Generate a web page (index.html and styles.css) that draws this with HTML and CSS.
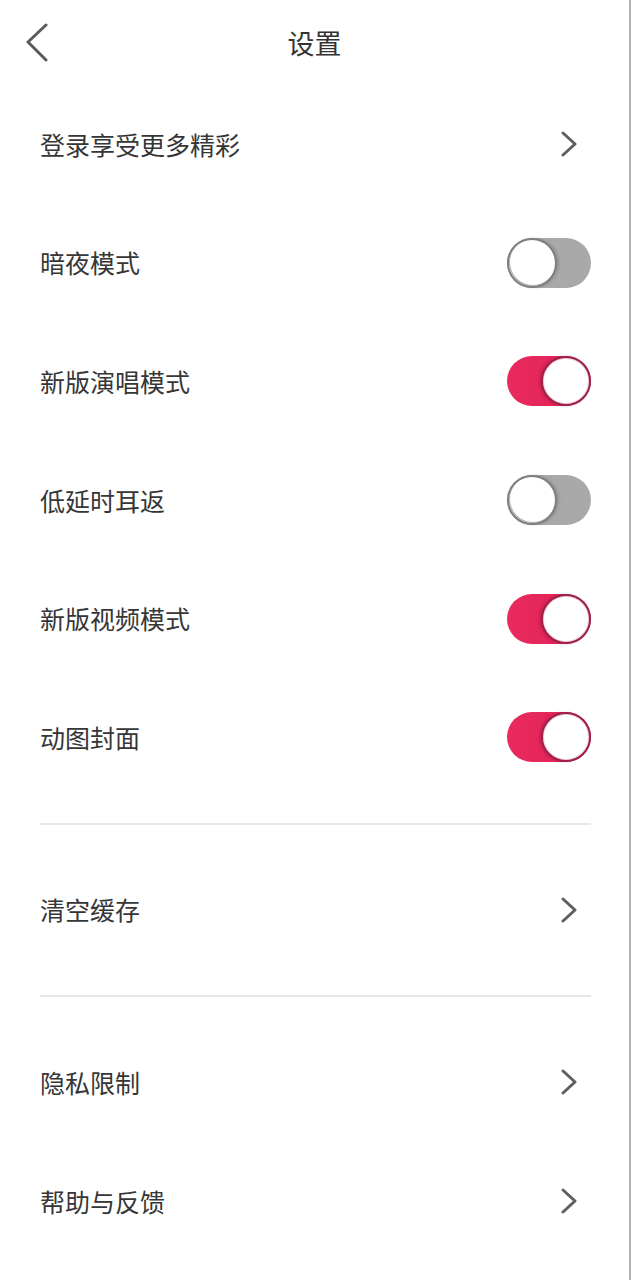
FILE: index.html
```html
<!DOCTYPE html>
<html lang="zh">
<head>
<meta charset="utf-8">
<title>设置</title>
<link rel="stylesheet" href="styles.css">
</head>
<body>
<div class="page">
  <header class="header">
    <div class="back">
      <svg width="26" height="40" viewBox="0 0 26 40"><path d="M22 2 L4 19 L22 37" fill="none" stroke="#5a5a5a" stroke-width="3" stroke-linecap="round" stroke-linejoin="round"/></svg>
    </div>
    <h1 class="title">设置</h1>
    <div></div>
  </header>
  <ul class="list">
    <li class="row"><span class="label">登录享受更多精彩</span><svg class="chev" width="18" height="26" viewBox="0 0 18 26"><path d="M3 2 L15 13 L3 24" fill="none" stroke="#5e5e5e" stroke-width="3" stroke-linecap="round" stroke-linejoin="round"/></svg></li>
    <li class="row"><span class="label">暗夜模式</span><span class="toggle"><span class="knob"></span></span></li>
    <li class="row"><span class="label">新版演唱模式</span><span class="toggle on"><span class="knob"></span></span></li>
    <li class="row"><span class="label">低延时耳返</span><span class="toggle"><span class="knob"></span></span></li>
    <li class="row"><span class="label">新版视频模式</span><span class="toggle on"><span class="knob"></span></span></li>
    <li class="row"><span class="label">动图封面</span><span class="toggle on"><span class="knob"></span></span></li>
  </ul>
  <hr class="divider">
  <ul class="list">
    <li class="row"><span class="label">清空缓存</span><svg class="chev" width="18" height="26" viewBox="0 0 18 26"><path d="M3 2 L15 13 L3 24" fill="none" stroke="#5e5e5e" stroke-width="3" stroke-linecap="round" stroke-linejoin="round"/></svg></li>
  </ul>
  <hr class="divider">
  <ul class="list">
    <li class="row"><span class="label">隐私限制</span><svg class="chev" width="18" height="26" viewBox="0 0 18 26"><path d="M3 2 L15 13 L3 24" fill="none" stroke="#5e5e5e" stroke-width="3" stroke-linecap="round" stroke-linejoin="round"/></svg></li>
    <li class="row"><span class="label">帮助与反馈</span><svg class="chev" width="18" height="26" viewBox="0 0 18 26"><path d="M3 2 L15 13 L3 24" fill="none" stroke="#5e5e5e" stroke-width="3" stroke-linecap="round" stroke-linejoin="round"/></svg></li>
  </ul>
</div>
</body>
</html>
```

FILE: styles.css
```css
* { box-sizing: border-box; }
html, body {
  margin: 0;
  padding: 0;
  background: #fff;
}
body {
  font-family: "Noto Sans CJK SC", "Noto Sans", sans-serif;
  color: #333;
}
.page {
  width: 631px;
  min-height: 1280px;
  border-right: 2px solid #b4b4b4;
}
.header {
  height: 85px;
  display: grid;
  grid-template-columns: 1fr auto 1fr;
  align-items: center;
}
.back {
  padding-left: 24px;
  display: flex;
  align-items: center;
}
.title {
  margin: 0;
  font-size: 27px;
  font-weight: 400;
  color: #333;
  line-height: 1;
}
.list {
  list-style: none;
  margin: 0;
  padding: 0;
}
.row {
  height: 118.6px;
  display: flex;
  align-items: center;
  justify-content: space-between;
  padding: 0 38px 0 40px;
}
.label {
  font-size: 25px;
  line-height: 1;
  color: #363636;
}
.chev {
  margin-right: 13px;
  display: block;
}
.divider {
  border: 0;
  height: 2px;
  background: #e6e6e6;
  margin: 26px 38px 26px 40px;
}
.toggle {
  position: relative;
  width: 84px;
  height: 50px;
  border-radius: 25px;
  background: #a9a9a9;
  display: block;
}
.toggle .knob {
  position: absolute;
  top: 0;
  left: 0;
  width: 50px;
  height: 50px;
  border-radius: 50%;
  background: #fff;
  border: 2px solid #7f7f7f;
  box-shadow: inset 1px -1px 0 #b8b8b8, 2px 0 3px rgba(0,0,0,0.15);
}
.toggle.on {
  background: linear-gradient(90deg, #ea2a5f 0%, #e3255a 60%, #c81f4f 100%);
}
.toggle.on .knob {
  left: 34px;
  border-color: #a0204a;
  box-shadow: inset 0 0 0 1px #f3d6de, -2px 0 3px rgba(0,0,0,0.15);
}
```
